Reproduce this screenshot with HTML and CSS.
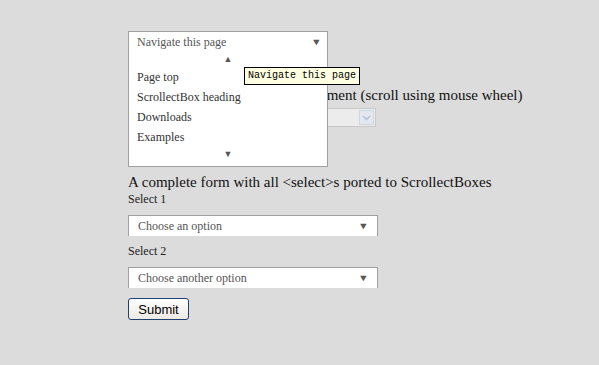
FILE: index.html
```html
<!DOCTYPE html>
<html lang="en">
<head>
    <meta charset="UTF-8">
    <title>ScrollectBox demo</title>
    <link rel="stylesheet" href="styles.css">
</head>
<body>
    <div class="page">
        <!-- navigation box, opened -->
        <div class="nav">
            <div class="sbox nav-box">
                <span class="sbox-text">Navigate this page</span>
                <span class="arrow">&#9660;</span>
            </div>
            <div class="dropdown">
                <div class="dropdown-head">
                    <span class="sbox-text">Navigate this page</span>
                    <span class="arrow">&#9660;</span>
                </div>
                <div class="scroll-arrow">&#9650;</div>
                <ul class="options">
                    <li>Page top</li>
                    <li>ScrollectBox heading</li>
                    <li>Downloads</li>
                    <li>Examples</li>
                </ul>
                <div class="scroll-arrow">&#9660;</div>
            </div>
            <div class="tooltip">Navigate this page</div>
        </div>

        <h2>A tiny scrollable native select element (scroll using mouse wheel)</h2>
        <div class="native">
            <span class="native-text">Choose an option</span>
            <span class="native-btn"><svg width="9" height="6" viewBox="0 0 9 6"><path d="M1 1 L4.5 4.5 L8 1" fill="none" stroke="#b8c4d4" stroke-width="1.6"/></svg></span>
        </div>

        <h2 class="form-title">A complete form with all &lt;select&gt;s ported to ScrollectBoxes</h2>
        <form class="demo-form">
            <label class="field-label">Select 1</label>
            <div class="sbox wide">
                <span class="sbox-text">Choose an option</span>
                <span class="arrow">&#9660;</span>
            </div>
            <label class="field-label">Select 2</label>
            <div class="sbox wide">
                <span class="sbox-text">Choose another option</span>
                <span class="arrow">&#9660;</span>
            </div>
            <button type="button" class="submit">Submit</button>
        </form>
    </div>
</body>
</html>
```

FILE: styles.css
```css
body {
    margin: 0;
    background: #dcdcdc;
    font-family: "Liberation Serif", "Times New Roman", serif;
    color: #111;
}

.page {
    padding: 31px 0 0 128px;
}

.nav {
    position: relative;
    height: 55px;
}

.sbox {
    display: flex;
    align-items: center;
    justify-content: space-between;
    box-sizing: border-box;
    background: #fff;
    border: 1px solid #a0a0a0;
    border-bottom: none;
    height: 21px;
    padding: 0 9px 0 9px;
    font-size: 12px;
    color: #555;
}

.nav-box {
    width: 200px;
}

.arrow {
    font-size: 9px;
    color: #555;
    transform: scaleX(1.2);
}

.dropdown {
    position: absolute;
    left: 0;
    top: 0;
    width: 200px;
    height: 136px;
    box-sizing: border-box;
    background: #fff;
    border: 1px solid #a0a0a0;
    font-size: 12px;
    color: #333;
}

.dropdown-head {
    display: flex;
    justify-content: space-between;
    align-items: center;
    height: 20px;
    padding: 0 6px 0 8px;
    color: #555;
}

.scroll-arrow {
    text-align: center;
    font-size: 9px;
    color: #555;
    height: 12px;
    line-height: 12px;
    margin-top: 1px;
}

.options {
    list-style: none;
    margin: 0;
    padding: 2px 0 0 8px;
}

.options li {
    height: 20px;
    line-height: 20px;
}

.tooltip {
    position: absolute;
    left: 116px;
    top: 36px;
    height: 16px;
    line-height: 16px;
    padding: 0 3px;
    background: #ffffe1;
    border: 1px solid #000;
    font-family: "Liberation Mono", "Courier New", monospace;
    font-size: 10px;
    color: #000;
    z-index: 2;
}

h2 {
    margin: 0;
    font-size: 15px;
    font-weight: normal;
    line-height: 18px;
}

.native {
    display: flex;
    align-items: center;
    justify-content: space-between;
    width: 248px;
    height: 19px;
    margin-top: 4px;
    box-sizing: border-box;
    border: 1px solid #c8c8c8;
    background: #ececec;
    font-family: "Liberation Sans", Arial, sans-serif;
    font-size: 13px;
    color: #a8a8a8;
    padding-left: 3px;
}

.native-btn {
    display: flex;
    align-items: center;
    justify-content: center;
    width: 15px;
    height: 15px;
    margin-right: 1px;
    background: #e4e8ee;
    border: 1px solid #d0d6de;
    box-sizing: border-box;
}

.form-title {
    margin-top: 46px;
}

.demo-form {
    display: flex;
    flex-direction: column;
    align-items: flex-start;
}

.field-label {
    font-size: 12px;
    line-height: 16px;
    margin: 0 0 8px;
    color: #222;
}

.wide {
    width: 250px;
    margin-bottom: 7px;
}

.submit {
    margin-top: 3px;
    width: 61px;
    height: 22px;
    padding: 0;
    font-family: "Liberation Sans", Arial, sans-serif;
    font-size: 13px;
    color: #000;
    background: linear-gradient(#ffffff, #ece9e4);
    border: 1px solid #1f3f6f;
    border-radius: 3px;
}
```
